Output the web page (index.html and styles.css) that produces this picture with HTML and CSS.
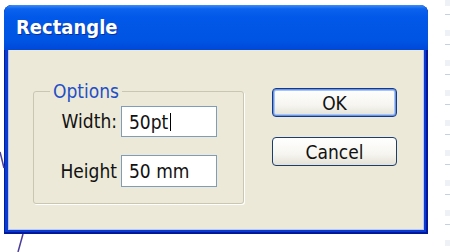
FILE: index.html
```html
<!DOCTYPE html>
<html lang="en">
<head>
    <meta charset="UTF-8">
    <title>Rectangle</title>
    <link rel="stylesheet" href="styles.css">
</head>
<body>
    <div class="window">
        <div class="titlebar">Rectangle</div>
        <div class="dialog">
            <fieldset class="options">
                <legend>Options</legend>
                <label for="w">Width:</label>
                <div class="field"><span id="w">50pt</span><span class="caret"></span></div>
                <label for="h">Height</label>
                <div class="field"><span id="h">50 mm</span></div>
            </fieldset>
            <div class="buttons">
                <button class="btn btn-default">OK</button>
                <button class="btn">Cancel</button>
            </div>
        </div>
    </div>
    <div class="strip"></div>

    <!-- pen stroke left over on the desktop -->
    <svg class="scribble" width="450" height="252" viewBox="0 0 450 252">
        <path d="M0 152 L4 168" stroke="#4b3d9c" stroke-width="1.5" fill="none"/>
        <path d="M23 234 L18 252" stroke="#4b3d9c" stroke-width="1.5" fill="none"/>
    </svg>
</body>
</html>
```

FILE: styles.css
```css
body {
    margin: 0;
    background-color: #fff;
    font-family: "DejaVu Sans Condensed", "DejaVu Sans", sans-serif;
    font-stretch: condensed;
    display: flex;
    align-items: flex-start;
    height: 252px;
    overflow: hidden;
}

.window {
    margin: 5px 0 0 4px;
    width: 424px;
    display: flex;
    flex-direction: column;
    padding: 0 4px 4px;
    box-sizing: border-box;
    background: #0b3ad2;
    border-radius: 8px 8px 0 0;
    box-shadow: inset -2px -2px 0 #00189a, inset 1px 0 0 #001e9e;
}

.titlebar {
    height: 45px;
    margin: 0 -4px;
    padding: 0 12px;
    border-radius: 8px 8px 0 0;
    background: linear-gradient(#3d8cf8 0, #0a62ee 4px, #0258e8 12px, #0054e3 36px, #0048d8 45px);
    color: #fff;
    font-weight: bold;
    font-size: 20px;
    line-height: 44px;
    text-shadow: 1px 1px 0 #0b2f9a;
}

.dialog {
    height: 180px;
    background-color: #ece9d8;
    border: 1px solid #b8c8f0;
    border-top: none;
    box-sizing: border-box;
    display: flex;
    align-items: flex-start;
    padding: 31px 0 0 24px;
}

.options {
    margin: 0;
    width: 211px;
    height: 123px;
    box-sizing: border-box;
    border: 1px solid #c9c6b4;
    border-radius: 3px;
    box-shadow: 1px 1px 0 #fff;
    padding: 5px 0 0 0;
    display: grid;
    grid-template-columns: 83px 96px;
    grid-template-rows: 31px 32px;
    column-gap: 4px;
    row-gap: 18px;
    align-content: start;
}

.options legend {
    margin-left: 16px;
    padding: 0 3px;
    color: #1f4fc6;
    font-size: 19px;
    line-height: 20px;
}

.options label {
    text-align: right;
    font-size: 19px;
    line-height: 31px;
    color: #111;
    align-self: center;
}

.field {
    background-color: #fff;
    border: 1px solid #7f9db9;
    font-size: 19px;
    line-height: 28px;
    padding-left: 7px;
    color: #111;
    display: flex;
    align-items: center;
}

.caret {
    width: 1px;
    height: 18px;
    background-color: #000;
    margin-left: 2px;
}

.buttons {
    margin: 7px 0 0 28px;
    display: flex;
    flex-direction: column;
    gap: 20px;
}

.btn {
    width: 125px;
    height: 29px;
    padding: 0;
    font-family: inherit;
    font-stretch: condensed;
    font-size: 19px;
    color: #111;
    border: 1px solid #1c3d6e;
    border-radius: 4px;
    background: linear-gradient(#ffffff 0, #f6f5f0 60%, #e3e1d6 100%);
}

.btn-default {
    border-color: #12398a;
    box-shadow: inset 0 0 0 1px #6a94e4, inset 0 0 0 2px #aac4f2;
}

.strip {
    margin-left: 17px;
    width: 5px;
    height: 252px;
    background: repeating-linear-gradient(#eef1f6 0, #eef1f6 6px, #fff 6px, #fff 14px, #c5d0e2 14px, #c5d0e2 15px, #fff 15px, #fff 30px);
}

.scribble {
    position: absolute;
    left: 0;
    top: 0;
    pointer-events: none;
}
```
